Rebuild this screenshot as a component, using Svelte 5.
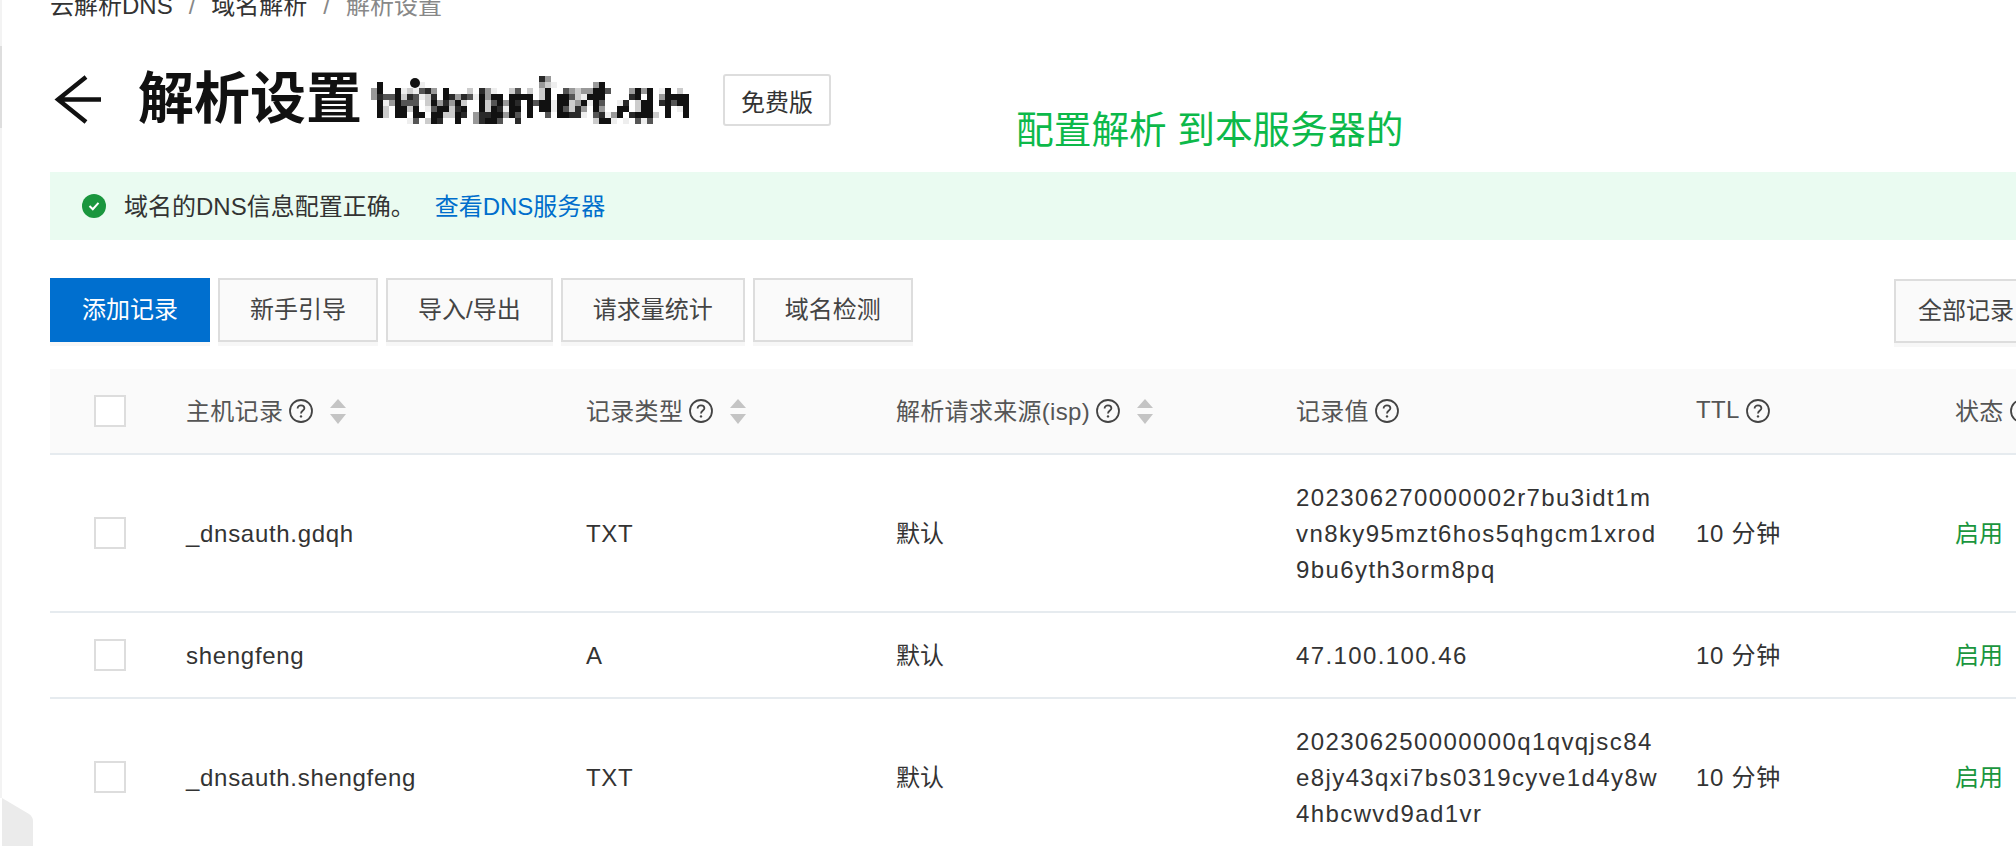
<script>
  const crumbs = ['云解析DNS', '域名解析', '解析设置'];
  const tools = ['新手引导', '导入/导出', '请求量统计', '域名检测'];

  const columns = [
    { label: '主机记录', sort: true },
    { label: '记录类型', sort: true },
    { label: '解析请求来源(isp)', sort: true },
    { label: '记录值' },
    { label: 'TTL' },
    { label: '状态' },
  ];

  const records = [
    {
      host: '_dnsauth.gdqh',
      type: 'TXT',
      value: ['202306270000002r7bu3idt1m', 'vn8ky95mzt6hos5qhgcm1xrod', '9bu6yth3orm8pq'],
    },
    { host: 'shengfeng', type: 'A', value: ['47.100.100.46'] },
    {
      host: '_dnsauth.shengfeng',
      type: 'TXT',
      value: ['202306250000000q1qvqjsc84', 'e8jy43qxi7bs0319cyve1d4y8w', '4hbcwvd9ad1vr'],
    },
  ];

  // the domain is pixelated in the original: "column:shade" per row of 6px blocks
  const shades = { 1: '#eeeeee', 2: '#cccccc', 3: '#999999', 4: '#555555', 5: '#2a2a2a', 6: '#111111' };
  const mosaicRows = [
    '28:5 29:3',
    '1:6 8:1 28:3 29:2 30:1 37:3 38:6',
    '0:3 1:6 4:6 5:1 6:2 7:1 8:4 9:5 10:3 12:6 16:2 18:5 19:3 20:1 23:2 24:4 26:2 28:2 29:6 32:4 33:3 34:2 35:3 36:3 37:6 38:6 39:4 43:3 44:6 45:3 46:6 48:1 49:6 51:2',
    '0:3 1:5 2:4 3:4 4:6 5:2 6:5 7:4 8:1 9:2 10:5 12:6 13:5 14:3 15:5 16:4 17:1 18:6 19:3 20:6 21:6 23:6 24:6 25:6 26:6 28:2 29:6 31:6 32:6 33:4 34:2 35:1 36:6 37:6 38:6 43:5 44:6 46:6 48:3 49:6 50:6 51:6 52:6',
    '1:6 2:1 3:3 4:6 5:4 6:4 7:4 9:2 10:6 11:3 12:5 13:3 14:6 15:2 18:6 19:2 20:4 21:6 22:3 23:6 24:5 26:6 27:4 28:6 29:6 30:1 31:6 32:6 33:2 34:3 35:6 36:1 37:6 38:4 41:1 42:5 44:2 45:6 46:6 48:5 49:6 50:4 51:6 52:6',
    '1:6 2:2 4:6 5:6 6:2 7:6 9:1 10:4 11:6 12:6 13:2 14:5 15:6 18:6 19:2 20:6 21:5 22:1 23:6 24:6 26:6 28:6 29:6 30:1 31:6 32:4 33:2 34:5 35:3 37:6 38:3 41:6 42:6 44:2 45:6 46:6 49:6 51:1 52:6',
    '1:6 2:2 4:6 5:6 7:6 8:6 10:6 11:6 12:2 13:2 14:6 15:5 17:3 18:5 19:5 20:6 21:6 22:3 23:6 24:4 26:6 29:4 31:6 32:6 33:5 34:5 35:1 37:4 38:5 39:1 40:3 41:6 43:5 44:6 45:6 46:6 47:2 49:6 52:6',
    '6:1 7:4 9:2 10:6 11:5 14:6 17:3 18:5 19:6 20:6 21:4 24:5 37:2 38:6 39:6 40:1 42:1 44:4 45:1 46:4',
  ];
  const mosaic = mosaicRows.flatMap((row, y) =>
    row.split(' ').map((cell) => {
      const [x, shade] = cell.split(':');
      return { x: x * 6, y: y * 6, fill: shades[shade] };
    })
  );
</script>

<div class="page">
  <div class="edge"></div>
  <div class="edge-mark"></div>
  <svg class="corner" width="33" height="48" viewBox="0 0 33 48" aria-hidden="true">
    <path d="M2 0 L29 16 Q33 19 33 23 V48 H2 Z" fill="#ebebeb" />
  </svg>

  <nav class="crumbs">
    {#each crumbs as crumb, i (crumb)}
      {#if i > 0}<span class="crumb-sep">/</span>{/if}
      <span class:current={i === crumbs.length - 1}>{crumb}</span>
    {/each}
  </nav>

  <header class="title-row">
    <svg class="back" width="51" height="52" viewBox="0 0 51 52" aria-hidden="true">
      <path d="M51 25.5 H8 M36 3 L8 25.5 L36 48" fill="none" stroke="#111" stroke-width="4.4" />
    </svg>
    <h1>解析设置</h1>
    <svg class="domain" width="318" height="52" viewBox="0 0 318 52" shape-rendering="crispEdges" aria-hidden="true">
      {#each mosaic as block}
        <rect x={block.x} y={block.y + 2} width="6" height="6" fill={block.fill} />
      {/each}
      <circle cx="44" cy="9" r="5" fill="#111" shape-rendering="auto" />
    </svg>
    <span class="tag">免费版</span>
  </header>

  <p class="note">配置解析 到本服务器的</p>

  <div class="alert">
    <svg width="24" height="24" viewBox="0 0 24 24" aria-hidden="true">
      <circle cx="12" cy="12" r="12" fill="#1a963e" />
      <path d="M7.5 12 L10.8 15.2 L16.5 8.8" fill="none" stroke="#fff" stroke-width="2" />
    </svg>
    <span class="alert-text">域名的DNS信息配置正确。</span>
    <span class="alert-link">查看DNS服务器</span>
  </div>

  <div class="toolbar">
    <button class="btn primary">添加记录</button>
    {#each tools as tool (tool)}
      <button class="btn">{tool}</button>
    {/each}
    <button class="btn filter">全部记录</button>
  </div>

  <table>
    <colgroup>
      <col style="width:136px" />
      <col style="width:400px" />
      <col style="width:310px" />
      <col style="width:400px" />
      <col style="width:400px" />
      <col style="width:259px" />
      <col style="width:300px" />
    </colgroup>
    <thead>
      <tr>
        <th><span class="check"></span></th>
        {#each columns as col (col.label)}
          <th>
            <span class="head">
              <span class="label">{col.label}</span>
              <svg class="help" width="24" height="24" viewBox="0 0 24 24" aria-hidden="true">
                <circle cx="12" cy="12" r="11" fill="none" stroke="#444" stroke-width="1.8" />
                <path d="M8.6 9.4 C8.6 7.4 10.2 6.3 12 6.3 C13.9 6.3 15.4 7.5 15.4 9.2 C15.4 11.4 12 11.6 12 14.4" fill="none" stroke="#444" stroke-width="1.8" />
                <circle cx="12" cy="17.4" r="1.2" fill="#444" />
              </svg>
              {#if col.sort}
                <svg class="sort" width="16" height="25" viewBox="0 0 16 25" aria-hidden="true">
                  <path d="M8 0 L16 9 H0 Z M0 15 H16 L8 25 Z" fill="#c4c4c4" />
                </svg>
              {/if}
            </span>
          </th>
        {/each}
      </tr>
    </thead>
    <tbody>
      {#each records as record (record.host)}
        <tr>
          <td class="box"><span class="check"></span></td>
          <td class="latin">{record.host}</td>
          <td class="latin">{record.type}</td>
          <td>默认</td>
          <td class="value">
            {#each record.value as line (line)}
              <div>{line}</div>
            {/each}
          </td>
          <td class="ttl">10 分钟</td>
          <td class="on">启用</td>
        </tr>
      {/each}
    </tbody>
  </table>
</div>

<style>
  :global(body) {
    background: #fff;
  }

  .page {
    position: relative;
    box-sizing: border-box;
    width: 2016px;
    height: 846px;
    padding-left: 50px;
    overflow: hidden;
    font-family: 'Liberation Sans', 'Noto Sans CJK SC', sans-serif;
    font-size: 24px;
    color: #333;
  }

  .edge {
    position: absolute;
    left: 0;
    top: 0;
    width: 2px;
    height: 798px;
    background: #f3f3f3;
  }

  .edge-mark {
    position: absolute;
    left: 0;
    top: 46px;
    width: 2px;
    height: 82px;
    background: #dedede;
  }

  .corner {
    position: absolute;
    left: 0;
    top: 798px;
  }

  .crumbs {
    display: flex;
    height: 34px;
    margin-top: -11px;
    line-height: 34px;
    color: #333;
  }

  .crumb-sep {
    margin: 0 16px;
    color: #888;
  }

  .current {
    color: #888;
  }

  .title-row {
    display: flex;
    align-items: center;
    height: 52px;
    margin-top: 51px;
  }

  .back {
    flex-shrink: 0;
    margin-right: 37px;
  }

  h1 {
    margin: 0 0 3px;
    font-size: 56px;
    line-height: 52px;
    font-weight: 700;
    color: #111;
    white-space: nowrap;
  }

  .domain {
    flex-shrink: 0;
    margin-left: 9px;
  }

  .tag {
    box-sizing: border-box;
    display: flex;
    align-items: center;
    justify-content: center;
    width: 108px;
    height: 52px;
    margin-left: 34px;
    border: 2px solid #ddd;
    border-radius: 3px;
    color: #333;
  }

  .note {
    position: absolute;
    left: 1016px;
    top: 113px;
    margin: 0;
    font-size: 37.7px;
    line-height: 34px;
    color: #0cb94a;
    white-space: nowrap;
  }

  .alert {
    box-sizing: border-box;
    display: flex;
    align-items: center;
    height: 68px;
    margin-top: 46px;
    padding-left: 32px;
    background: #eafbf1;
  }

  .alert-text {
    margin-left: 18px;
    padding-bottom: 3px;
  }

  .alert-link {
    margin-left: 20px;
    padding-bottom: 3px;
    color: #006ecc;
  }

  .toolbar {
    display: flex;
    gap: 8px;
    width: 2044px;
    margin-top: 38px;
  }

  .btn {
    box-sizing: border-box;
    height: 64px;
    padding: 0 30px 6px;
    border: 2px solid #ddd;
    border-radius: 0;
    background: #fafafa;
    box-shadow: 0 4px 0 #f7f7f7;
    font: inherit;
    color: #444;
  }

  .primary {
    border-color: #006fcf;
    background: #006fcf;
    color: #fff;
  }

  .filter {
    width: 200px;
    margin-top: 1px;
    margin-left: auto;
    padding: 0 22px 6px;
    text-align: left;
  }

  table {
    margin-top: 26px;
    border-collapse: separate;
    border-spacing: 0;
    table-layout: fixed;
    width: 2205px;
  }

  th {
    height: 84px;
    padding: 0;
    border-bottom: 2px solid #e6ebef;
    background: #fafafa;
    font-weight: 400;
    text-align: left;
    color: #555;
    white-space: nowrap;
  }

  td {
    padding: 25px 0 23px;
    border-bottom: 2px solid #e6ebef;
    line-height: 36px;
    color: #333;
    vertical-align: middle;
    white-space: nowrap;
  }

  td.box {
    padding: 24px 0;
  }

  .head {
    display: inline-flex;
    align-items: center;
    gap: 6px;
  }

  .label {
    padding-bottom: 3px;
    letter-spacing: 0.3px;
  }

  .sort {
    margin-left: 11px;
  }

  .check {
    box-sizing: border-box;
    display: block;
    width: 32px;
    height: 32px;
    margin-left: 44px;
    border: 2px solid #ddd;
    background: #fff;
  }

  .latin {
    letter-spacing: 0.7px;
  }

  .value {
    letter-spacing: 1.4px;
  }

  .ttl {
    letter-spacing: 0.7px;
  }

  .on {
    color: #1a963e;
  }
</style>
